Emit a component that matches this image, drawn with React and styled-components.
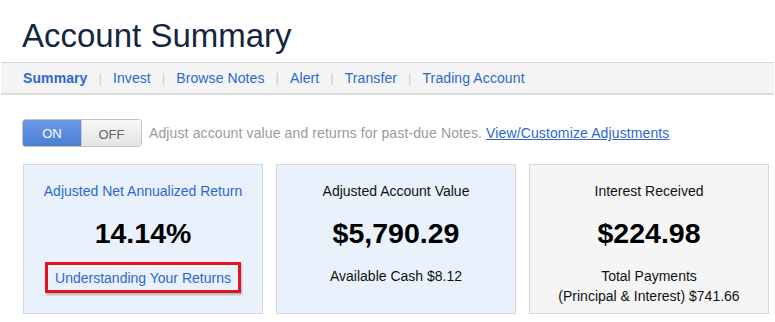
import React from "react";
import styled, { createGlobalStyle } from "styled-components";

const GlobalStyle = createGlobalStyle`
  html, body {
    margin: 0;
    padding: 0;
    background: #ffffff;
    font-family: "Liberation Sans", Arial, sans-serif;
  }
`;

const navItems = ["Summary", "Invest", "Browse Notes", "Alert", "Transfer", "Trading Account"];

const cards = [
  { title: "Adjusted Net Annualized Return", value: "14.14%", variant: "blue", link: "Understanding Your Returns" },
  { title: "Adjusted Account Value", value: "$5,790.29", variant: "blue", lines: ["Available Cash $8.12"] },
  { title: "Interest Received", value: "$224.98", variant: "gray", lines: ["Total Payments", "(Principal & Interest) $741.66"] },
];

export default function App() {
  return (
    <Page>
      <GlobalStyle />
      <Title>Account Summary</Title>
      <NavBar>
        {navItems.map((item, i) => (
          <React.Fragment key={item}>
            {i > 0 && <Separator>|</Separator>}
            <NavLink $active={i === 0}>{item}</NavLink>
          </React.Fragment>
        ))}
      </NavBar>
      <ToggleRow>
        <Toggle>
          <ToggleHalf $on>ON</ToggleHalf>
          <ToggleHalf>OFF</ToggleHalf>
        </Toggle>
        <Hint>
          Adjust account value and returns for past-due Notes.{" "}
          <HintLink href="#">View/Customize Adjustments</HintLink>
        </Hint>
      </ToggleRow>
      <Cards>
        {cards.map((c) => (
          <Card key={c.title} $variant={c.variant}>
            <CardTitle $blue={!!c.link}>{c.title}</CardTitle>
            <CardValue>{c.value}</CardValue>
            {c.link && <BoxedLink href="#">{c.link}</BoxedLink>}
            {c.lines && (
              <CardNote>
                {c.lines.map((l) => (
                  <div key={l}>{l}</div>
                ))}
              </CardNote>
            )}
          </Card>
        ))}
      </Cards>
    </Page>
  );
}

const Page = styled.div`
  width: 775px;
  height: 322px;
  overflow: hidden;
`;

const Title = styled.h1`
  margin: 0;
  padding: 17px 0 0 22px;
  height: 62px;
  box-sizing: border-box;
  font-size: 33px;
  line-height: 38px;
  font-weight: normal;
  color: #142640;
`;

const NavBar = styled.nav`
  margin: 0 1px;
  height: 33px;
  box-sizing: border-box;
  display: flex;
  align-items: center;
  padding: 0 0 1px 22px;
  background: #f4f4f4;
  border-top: 1px solid #d6d6d6;
  border-bottom: 2px solid #dcdcdc;
  font-size: 14px;
`;

const NavLink = styled.a`
  color: #2c68cf;
  font-weight: ${(p) => (p.$active ? "bold" : "normal")};
  text-decoration: none;
  letter-spacing: 0.1px;
`;

const Separator = styled.span`
  color: #cccccc;
  font-size: 13px;
  padding: 0 11px;
`;

const ToggleRow = styled.div`
  display: flex;
  align-items: center;
  padding: 24px 0 0 22px;
  height: 52px;
  box-sizing: border-box;
`;

const Toggle = styled.div`
  display: flex;
  width: 120px;
  height: 28px;
  border-radius: 3px;
  overflow: hidden;
  border: 1px solid #c4c4c4;
  box-sizing: border-box;
`;

const ToggleHalf = styled.div`
  flex: ${(p) => (p.$on ? "0 0 58px" : "1")};
  display: flex;
  align-items: center;
  justify-content: center;
  font-size: 13px;
  color: ${(p) => (p.$on ? "#ffffff" : "#666666")};
  background: ${(p) =>
    p.$on
      ? "linear-gradient(#6a9ae4, #4a7fd6)"
      : "linear-gradient(#f7f7f7, #e4e4e4)"};
  border-left: ${(p) => (p.$on ? "none" : "1px solid #cfcfcf")};
  padding-top: ${(p) => (p.$on ? "0" : "2px")};
`;

const Hint = styled.div`
  margin-left: 7px;
  font-size: 14px;
  color: #9a9a9a;
  letter-spacing: 0.12px;
`;

const HintLink = styled.a`
  color: #2c68cf;
  text-decoration: underline;
`;

const Cards = styled.div`
  display: flex;
  gap: 13px;
  padding: 17px 0 0 23px;
`;

const Card = styled.div`
  width: 240px;
  height: 150px;
  box-sizing: border-box;
  border: 1px solid #d4d6d8;
  background: ${(p) => (p.$variant === "blue" ? "#e9f1fc" : "#f5f5f5")};
  display: flex;
  flex-direction: column;
  align-items: center;
  padding-top: 18px;
  text-align: center;
`;

const CardTitle = styled.div`
  font-size: 14px;
  line-height: 16px;
  color: ${(p) => (p.$blue ? "#2c68cf" : "#111111")};
`;

const CardValue = styled.div`
  margin-top: 18px;
  font-size: 28.5px;
  line-height: 32px;
  font-weight: bold;
  color: #000000;
`;

const BoxedLink = styled.a`
  margin-top: 13px;
  width: 196px;
  height: 31px;
  box-sizing: border-box;
  border: 3px solid #e2141c;
  box-shadow: 1px 2px 2px rgba(0, 0, 0, 0.25);
  display: flex;
  align-items: center;
  justify-content: center;
  font-size: 14px;
  color: #2c68cf;
  text-decoration: none;
`;

const CardNote = styled.div`
  margin-top: 17px;
  font-size: 14px;
  line-height: 20px;
  color: #111111;
`;
